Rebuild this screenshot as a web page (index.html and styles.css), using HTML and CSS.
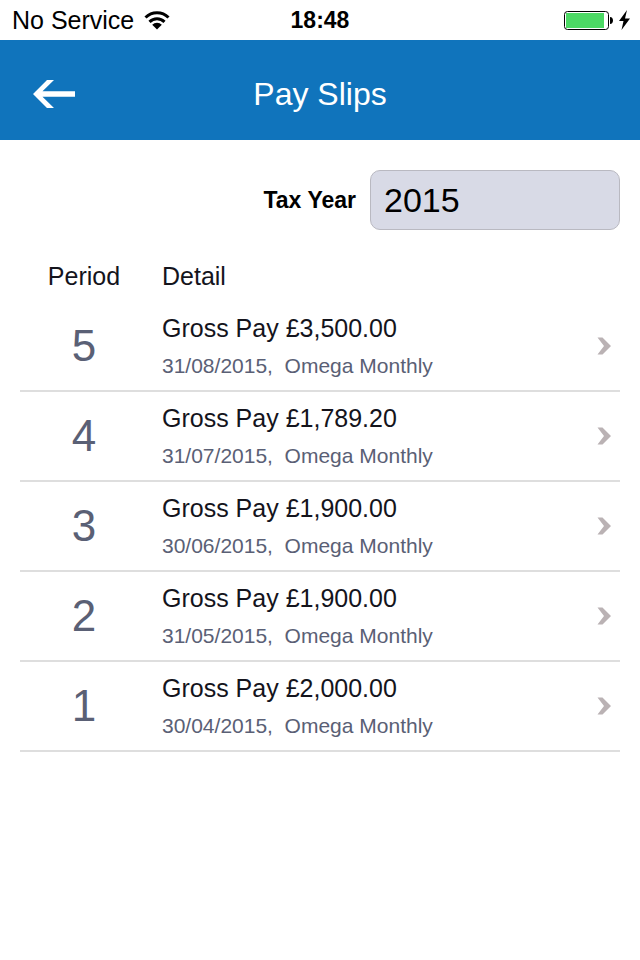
FILE: index.html
```html
<!DOCTYPE html>
<html lang="en">

<head>
    <meta charset="UTF-8">
    <meta name="viewport" content="width=device-width, initial-scale=1.0">
    <title>Pay Slips</title>
    <link rel="stylesheet" href="styles.css">
</head>

<body>
    <div class="status-bar">
        <div class="status-left">
            <span>No Service</span>
            <svg width="26" height="20" viewBox="0 0 26 20" aria-hidden="true">
                <g fill="none" stroke="#000" stroke-width="3">
                    <path d="M1.5 7.5a16.3 16.3 0 0 1 23 0"/>
                    <path d="M5.5 11.9a10.6 10.6 0 0 1 15 0"/>
                </g>
                <path d="M8.2 14.8a6.8 6.8 0 0 1 9.6 0L13 19.5z"/>
            </svg>
        </div>
        <div class="status-time">18:48</div>
        <div class="status-right">
            <svg width="66" height="22" viewBox="0 0 66 22" aria-hidden="true">
                <rect x="0.5" y="2.5" width="44" height="18" rx="3" fill="#fff" stroke="#000"/>
                <rect x="2" y="4" width="38" height="15" fill="#4cd964"/>
                <path d="M46 8c4 0 4 7 0 7z"/>
                <path d="M63 1 55 12h4.5L57.5 21 66 9.5h-5z"/>
            </svg>
        </div>
    </div>

    <header class="header">
        <button class="back-btn" type="button" aria-label="Back">
            <svg width="44" height="32" viewBox="0 0 44 32" aria-hidden="true">
                <path d="M1 16 15 2h7L10.5 13.3H43v5.4H10.5L22 30h-7z" fill="#fff"/>
            </svg>
        </button>
        <h1>Pay Slips</h1>
    </header>

    <main class="content">
        <form class="filter">
            <label for="tax-year">Tax Year</label>
            <select id="tax-year">
                <option>2015</option>
            </select>
        </form>

        <table class="payslips">
            <thead>
                <tr>
                    <th class="period" scope="col">Period</th>
                    <th class="detail" scope="col">Detail</th>
                    <td class="open"></td>
                </tr>
            </thead>
            <tbody>
                <tr>
                    <td class="period">5</td>
                    <td class="detail">
                        <div class="gross">Gross Pay £3,500.00</div>
                        <div class="info">31/08/2015,&nbsp; Omega Monthly</div>
                    </td>
                    <td class="open"><a href="#period-5" aria-label="Open period 5"><svg width="14" height="18" viewBox="0 0 14 18" aria-hidden="true"><path d="M.5 .5h5l8.500 8.500-8.500 8.500h-5L7 9z"/></svg></a></td>
                </tr>
                <tr>
                    <td class="period">4</td>
                    <td class="detail">
                        <div class="gross">Gross Pay £1,789.20</div>
                        <div class="info">31/07/2015,&nbsp; Omega Monthly</div>
                    </td>
                    <td class="open"><a href="#period-4" aria-label="Open period 4"><svg width="14" height="18" viewBox="0 0 14 18" aria-hidden="true"><path d="M.5 .5h5l8.500 8.500-8.500 8.500h-5L7 9z"/></svg></a></td>
                </tr>
                <tr>
                    <td class="period">3</td>
                    <td class="detail">
                        <div class="gross">Gross Pay £1,900.00</div>
                        <div class="info">30/06/2015,&nbsp; Omega Monthly</div>
                    </td>
                    <td class="open"><a href="#period-3" aria-label="Open period 3"><svg width="14" height="18" viewBox="0 0 14 18" aria-hidden="true"><path d="M.5 .5h5l8.500 8.500-8.500 8.500h-5L7 9z"/></svg></a></td>
                </tr>
                <tr>
                    <td class="period">2</td>
                    <td class="detail">
                        <div class="gross">Gross Pay £1,900.00</div>
                        <div class="info">31/05/2015,&nbsp; Omega Monthly</div>
                    </td>
                    <td class="open"><a href="#period-2" aria-label="Open period 2"><svg width="14" height="18" viewBox="0 0 14 18" aria-hidden="true"><path d="M.5 .5h5l8.500 8.500-8.500 8.500h-5L7 9z"/></svg></a></td>
                </tr>
                <tr>
                    <td class="period">1</td>
                    <td class="detail">
                        <div class="gross">Gross Pay £2,000.00</div>
                        <div class="info">30/04/2015,&nbsp; Omega Monthly</div>
                    </td>
                    <td class="open"><a href="#period-1" aria-label="Open period 1"><svg width="14" height="18" viewBox="0 0 14 18" aria-hidden="true"><path d="M.5 .5h5l8.500 8.500-8.500 8.500h-5L7 9z"/></svg></a></td>
                </tr>
            </tbody>
        </table>
    </main>
</body>

</html>
```
FILE: styles.css
```css
* {
    box-sizing: border-box;
}

body {
    margin: 0;
    font-family: "Liberation Sans", Arial, sans-serif;
    font-size: 25px;
    color: #14141c;
    background-color: #fff;
}

.status-bar {
    display: grid;
    grid-template-columns: 1fr auto 1fr;
    align-items: center;
    height: 40px;
    padding: 0 10px;
    color: #000;
}

.status-left {
    display: flex;
    align-items: center;
    gap: 10px;
    padding-left: 2px;
}

.status-time {
    font-size: 23px;
    font-weight: bold;
}

.status-right {
    display: flex;
    justify-content: flex-end;
}

.header {
    display: grid;
    grid-template-columns: 80px 1fr 80px;
    align-items: center;
    height: 100px;
    padding: 8px 0 0;
    background-color: #1074bc;
    color: #fff;
}

.header h1 {
    grid-column: 2;
    margin: 0;
    font-size: 32px;
    font-weight: normal;
    text-align: center;
}

.back-btn {
    display: flex;
    padding: 0 0 0 32px;
    border: none;
    background: none;
    cursor: pointer;
}

.content {
    padding: 30px 20px;
}

.filter {
    display: flex;
    justify-content: flex-end;
    align-items: center;
    gap: 14px;
    margin-bottom: 20px;
}

.filter label {
    color: #000;
    font-size: 23px;
    font-weight: bold;
}

.filter select {
    width: 250px;
    height: 60px;
    padding: 0 13px;
    border: 1px solid #b9b9c1;
    border-radius: 10px;
    appearance: none;
    background-color: #d8dae6;
    color: #000;
    font-family: inherit;
    font-size: 34px;
}

.payslips {
    width: 100%;
    border-collapse: separate;
    border-spacing: 0;
    table-layout: fixed;
}

.payslips th,
.payslips td {
    padding: 0;
    text-align: left;
    font-weight: normal;
}

.payslips thead tr {
    height: 52px;
}

.payslips tbody td {
    height: 90px;
    border-bottom: 2px solid #dedede;
}

.payslips .period {
    width: 128px;
    text-align: center;
}

.payslips tbody .period {
    font-size: 44px;
    color: #5a6075;
}

.payslips .detail {
    padding-left: 14px;
}

.payslips tbody .detail {
    padding-top: 4px;
}

.gross {
    line-height: 36px;
}

.info {
    font-size: 21px;
    line-height: 40px;
    color: #5a6075;
}

.payslips .open {
    width: 40px;
}

.payslips .open a {
    display: flex;
    justify-content: flex-end;
    padding-right: 9px;
}

.open svg {
    fill: #bab2b4;
}
```
